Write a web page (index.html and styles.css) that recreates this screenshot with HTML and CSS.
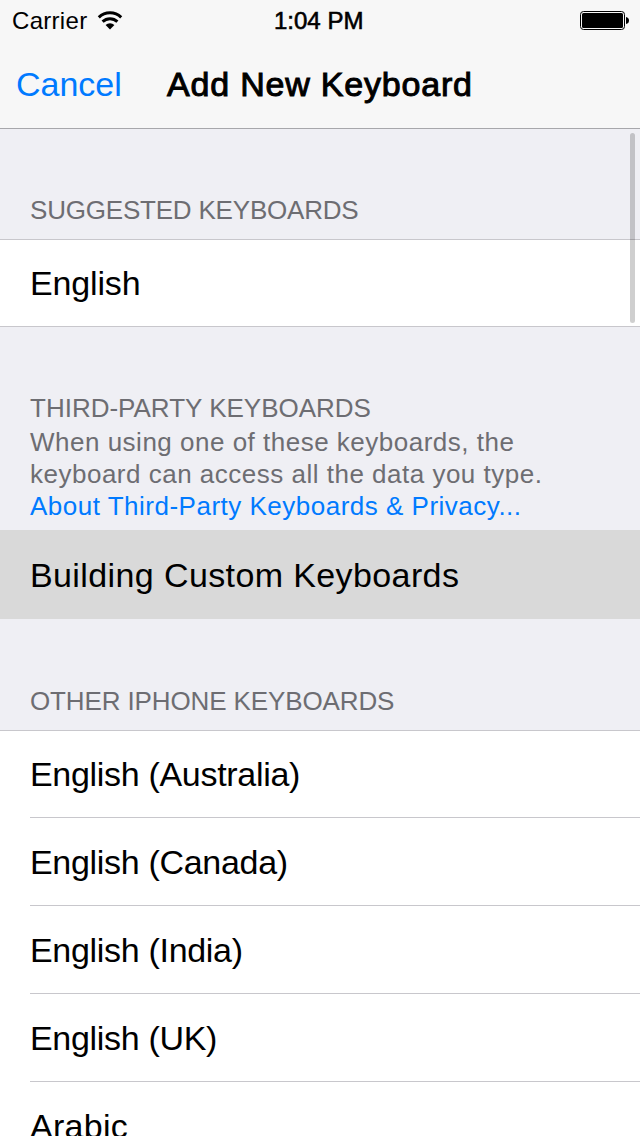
FILE: index.html
```html
<!DOCTYPE html>
<html lang="en">
<head>
<meta charset="utf-8">
<title>Add New Keyboard</title>
<link rel="stylesheet" href="styles.css">
</head>
<body>
<div class="screen">
  <header class="header">
    <div class="status">
      <div class="carrier">
        <span>Carrier</span>
        <svg class="wifi" width="26" height="19" viewBox="0 0 26 19"><g fill="none" stroke="#000" stroke-width="3"><path d="M1.8 6.3a16.3 16.3 0 0 1 22.4 0"/><path d="M5.6 10.7a10.8 10.8 0 0 1 14.8 0"/></g><path d="M13 18.4l-4.4-4.4a6.4 6.4 0 0 1 8.8 0z"/></svg>
      </div>
      <span class="clock">1:04 PM</span>
      <svg class="battery" width="49" height="19" viewBox="0 0 49 19"><rect x=".5" y=".5" width="44" height="18" rx="3" fill="none" stroke="#000"/><rect x="2" y="2" width="41" height="15" rx="1.5"/><path d="M46 6q3 .5 3 3.5t-3 3.5z"/></svg>
    </div>
    <nav class="nav">
      <a class="cancel">Cancel</a>
      <h1 class="title">Add New Keyboard</h1>
    </nav>
  </header>
  <main>
    <section class="group">
      <h2 class="label suggested">SUGGESTED KEYBOARDS</h2>
      <div class="row">English</div>
    </section>
    <section class="group">
      <h2 class="label third">THIRD-PARTY KEYBOARDS</h2>
      <p class="note"><span>When using one of these keyboards, the</span><span>keyboard can access all the data you type.</span><a class="link">About Third-Party Keyboards &amp; Privacy...</a></p>
      <div class="selected">Building Custom Keyboards</div>
    </section>
    <section class="group">
      <h2 class="label other">OTHER IPHONE KEYBOARDS</h2>
      <ul class="list">
        <li>English (Australia)</li>
        <li>English (Canada)</li>
        <li>English (India)</li>
        <li>English (UK)</li>
        <li class="arabic">Arabic</li>
      </ul>
    </section>
  </main>
  <div class="scrollbar"></div>
</div>
</body>
</html>
```
FILE: styles.css
```css
* { box-sizing: border-box; }
body { margin: 0; font-family: "Liberation Sans", Arial, sans-serif; color: #000; }
h1, h2, p, ul { margin: 0; padding: 0; font-weight: 400; list-style: none; }
svg { display: block; flex: none; }
.screen { position: relative; width: 640px; height: 1136px; overflow: hidden; background: #efeff4; white-space: nowrap; }
.header { height: 129px; background: #f7f7f7; border-bottom: 1px solid #a7a7ab; }
.status { display: grid; grid-template-columns: 262px 1fr auto; height: 40px; padding: 0 11px 0 12px; font-size: 24px; line-height: 42px; }
.carrier { display: flex; gap: 10px; letter-spacing: 0.3px; }
.wifi { margin-top: 11px; }
.clock { -webkit-text-stroke: 0.6px #000; }
.battery { margin-top: 11px; }
.nav { display: flex; height: 88px; padding-left: 16px; font-size: 34px; line-height: 88px; }
.cancel { width: 151px; color: #007aff; }
.title { font-size: 34px; letter-spacing: 0.8px; -webkit-text-stroke: 1px #000; }
.label { padding: 65px 0 0 30px; font-size: 26px; line-height: 32px; color: #6d6d72; }
.suggested { height: 110px; letter-spacing: -0.2px; }
.other { padding-top: 66px; height: 111px; letter-spacing: -0.12px; }
.row { height: 88px; padding-left: 30px; border: solid #c8c7cc; border-width: 1px 0; background: #fff; font-size: 34px; line-height: 86px; letter-spacing: -0.15px; }
.note { display: flex; flex-direction: column; padding: 2px 0 8px 30px; font-size: 26px; line-height: 32px; letter-spacing: 0.5px; color: #6d6d72; }
.link { color: #007aff; }
.selected { height: 89px; padding: 1px 0 0 30px; background: #d9d9d9; font-size: 34px; line-height: 88px; letter-spacing: 0.39px; }
.list { padding-left: 30px; background: #fff; box-shadow: inset 0 1px #c8c7cc; font-size: 34px; line-height: 88px; letter-spacing: -0.31px; }
.list li { height: 88px; border-bottom: 1px solid #c8c7cc; }
.list .arabic { letter-spacing: 0.3px; }
.scrollbar { position: absolute; right: 5px; top: 133px; width: 5px; height: 190px; border-radius: 3px; background: rgba(0, 0, 0, 0.19); }
```
